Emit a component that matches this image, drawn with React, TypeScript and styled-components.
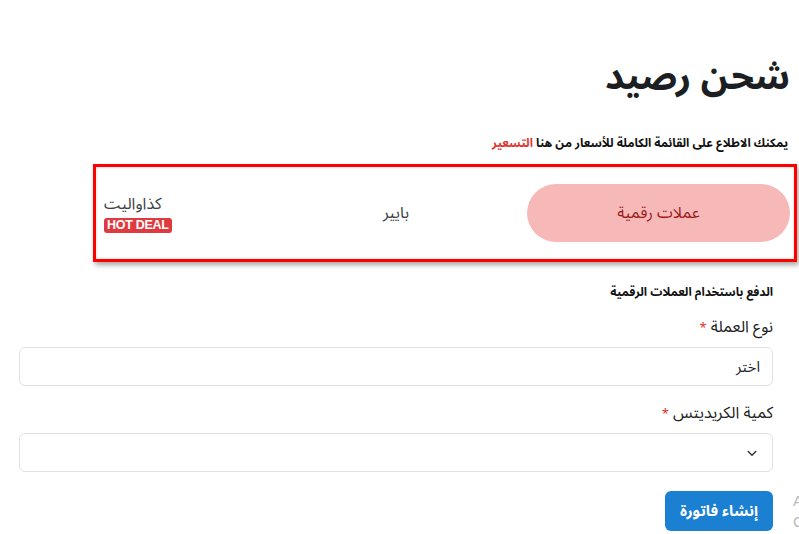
import React from 'react';
import styled, { createGlobalStyle } from 'styled-components';

const arabic = '"Noto Sans Arabic", "DejaVu Sans", sans-serif';

const GlobalStyle = createGlobalStyle`
  html, body {
    margin: 0;
    background: #fff;
    overflow: hidden;
  }
`;

const Page = styled.div`
  direction: rtl;
  padding: 49px 2px 0 19px;
  font-family: ${arabic};
  color: #212529;
`;

const Title = styled.h1`
  margin: 0 7px 0 0;
  font: bold 37px/56px ${arabic};
  color: #1b1e22;
`;

const Intro = styled.p`
  margin: 29px 9px 0 0;
  font: bold 12px/20px ${arabic};
  color: #111;
`;

const PriceLink = styled.a`
  color: #e0352f;
  text-decoration: none;
`;

const TabBar = styled.div`
  margin: 10px 0 0 74px;
  border: 3px solid #f00;
  box-shadow: 2px 3px 5px rgba(0, 0, 0, 0.35), inset 0 0 3px rgba(0, 0, 0, 0.2);
  display: grid;
  grid-template-columns: 263px 262px 1fr;
  align-items: center;
  padding: 17px 4px 17px 8px;
`;

const Tab = styled.button<{ $active?: boolean }>`
  height: 58px;
  border: none;
  border-radius: 29px;
  background: ${p => (p.$active ? '#f6b9b7' : 'transparent')};
  color: ${p => (p.$active ? '#9b1b1b' : '#3b3f44')};
  font: 16px ${arabic};
  display: flex;
  align-items: center;
  justify-content: center;
  cursor: pointer;
  padding: 0;
`;

const DealTab = styled.div`
  display: flex;
  flex-direction: column;
  align-items: flex-end;
  justify-content: center;
  gap: 4px;
  color: #3b3f44;
  font-size: 16px;
  line-height: 20px;
`;

const HotBadge = styled.span`
  direction: ltr;
  background: #e03a41;
  color: #fff;
  font: bold 12.5px/15px "Liberation Sans", Arial, sans-serif;
  letter-spacing: -0.3px;
  padding: 0 3px;
  border-radius: 3px;
`;

const Form = styled.div`
  padding: 21px 24px 0 0;
  display: flex;
  flex-direction: column;
`;

const Note = styled.p`
  margin: 0 0 -3px;
  font: bold 12px/20px ${arabic};
  color: #111;
`;

const Label = styled.label`
  margin: 14px 0 6px;
  font-size: 16px;
  line-height: 26px;
  color: #222;
`;

const Required = styled.span`
  color: #d9342b;
  font-size: 13px;
  margin-right: 4px;
`;

const Field = styled.div`
  height: 39px;
  box-sizing: border-box;
  border: 1px solid #dee2e6;
  border-radius: 6px;
  display: flex;
  align-items: center;
  padding: 0 12px;
  font-size: 15px;
  color: #212529;
`;

const Chevron = styled.svg`
  width: 12px;
  height: 12px;
  margin-right: 2px;
`;

const ButtonRow = styled.div`
  margin-top: 18px;
  display: flex;
  align-items: center;
`;

const SideNote = styled.div`
  direction: ltr;
  flex: none;
  width: 40px;
  margin: 0 -60px 0 20px;
  font: 15px/21px "Liberation Sans", Arial, sans-serif;
  color: #b7babe;
`;

const SubmitButton = styled.button`
  height: 40px;
  padding: 0 15px;
  border: none;
  border-radius: 6px;
  background: #1b80d2;
  color: #fff;
  font: bold 15px ${arabic};
`;

export default function App() {
  return (
    <>
      <GlobalStyle />
      <Page>
        <Title>شحن رصيد</Title>
        <Intro>
          يمكنك الاطلاع على القائمة الكاملة للأسعار من هنا <PriceLink href="#">التسعير</PriceLink>
        </Intro>

        <TabBar>
          <Tab $active>عملات رقمية</Tab>
          <Tab>بايير</Tab>
          <DealTab>
            <span>كذاواليت</span>
            <HotBadge>HOT DEAL</HotBadge>
          </DealTab>
        </TabBar>

        <Form>
          <Note>الدفع باستخدام العملات الرقمية</Note>
          <Label>
            نوع العملة<Required>*</Required>
          </Label>
          <Field>اختر</Field>
          <Label>
            كمية الكريديتس<Required>*</Required>
          </Label>
          <Field>
            <Chevron viewBox="0 0 16 16">
              <path d="M3 6l5 5 5-5" fill="none" stroke="#343a40" strokeWidth="2" strokeLinecap="round" strokeLinejoin="round" />
            </Chevron>
          </Field>
          <ButtonRow>
            <SideNote>
              Al
              <br />
              Co
            </SideNote>
            <SubmitButton>إنشاء فاتورة</SubmitButton>
          </ButtonRow>
        </Form>
      </Page>
    </>
  );
}
